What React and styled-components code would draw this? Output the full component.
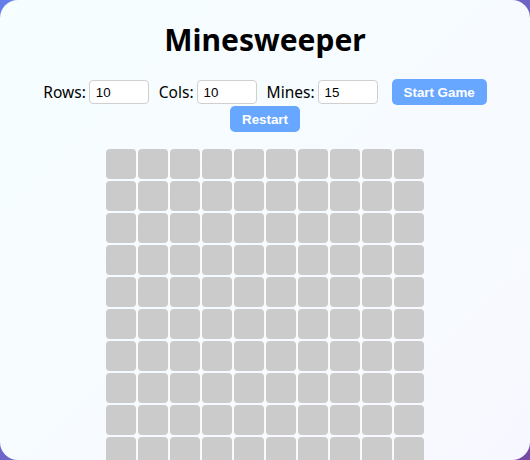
import React, { useState } from 'react';
import styled, { createGlobalStyle } from 'styled-components';

const GlobalStyle = createGlobalStyle`
  html, body {
    margin: 0;
    padding: 0;
    height: 100%;
    overflow: hidden;
  }
  body {
    background: linear-gradient(135deg, #667eea 0%, #764ba2 100%);
    font-family: "Noto Sans", "Open Sans", sans-serif;
  }
`;

const Card = styled.div`
  box-sizing: border-box;
  height: 100vh;
  border-radius: 18px;
  overflow: hidden;
  padding: 19px 20px 16px;
  background: linear-gradient(135deg, #f6feff 0%, #f7f8ff 100%);
  display: flex;
  flex-direction: column;
  align-items: center;
`;

const Title = styled.h1`
  margin: 0 0 19px;
  font-size: 30px;
  font-weight: 700;
  color: #000;
  line-height: normal;
`;

const Controls = styled.div`
  display: flex;
  flex-wrap: wrap;
  justify-content: center;
  align-items: center;
  column-gap: 10px;
  row-gap: 1px;
  max-width: 460px;
`;

const Label = styled.label`
  display: flex;
  align-items: center;
  gap: 3px;
  font-size: 15.5px;
  color: #000;
`;

const NumberInput = styled.input`
  box-sizing: border-box;
  width: 60px;
  height: 24px;
  padding: 0 6px;
  border: 1px solid #cfcfcf;
  border-radius: 4px;
  background: #fff;
  font-family: "Liberation Sans", Arial, sans-serif;
  font-size: 13.33px;
  color: #000;
  outline: none;
`;

const Button = styled.button`
  box-sizing: border-box;
  height: 26px;
  padding: 0 12px;
  margin-left: ${p => (p.$offset ? '4px' : '0')};
  border: none;
  border-radius: 5px;
  background: #68a7ff;
  color: #fff;
  font-family: "Liberation Sans", Arial, sans-serif;
  font-size: 13.33px;
  font-weight: 700;
  cursor: pointer;
`;

const Board = styled.div`
  margin-top: 17px;
  display: grid;
  grid-template-columns: repeat(${p => p.$cols}, 30px);
  grid-auto-rows: 30px;
  gap: 2px;
`;

const Cell = styled.div`
  background: #cbcbcb;
  border-radius: 4px;
`;

export default function App() {
  const [rows, setRows] = useState(10);
  const [cols, setCols] = useState(10);
  const [mines, setMines] = useState(15);
  const cells = Array.from({ length: rows * cols });

  return (
    <>
      <GlobalStyle />
      <Card>
        <Title>Minesweeper</Title>
        <Controls>
          <Label>
            Rows:
            <NumberInput type="text" value={rows} onChange={e => setRows(e.target.value)} />
          </Label>
          <Label>
            Cols:
            <NumberInput type="text" value={cols} onChange={e => setCols(e.target.value)} />
          </Label>
          <Label>
            Mines:
            <NumberInput type="text" value={mines} onChange={e => setMines(e.target.value)} />
          </Label>
          <Button $offset>Start Game</Button>
          <Button>Restart</Button>
        </Controls>
        <Board $cols={10}>
          {cells.map((_, i) => (
            <Cell key={i} />
          ))}
        </Board>
      </Card>
    </>
  );
}
